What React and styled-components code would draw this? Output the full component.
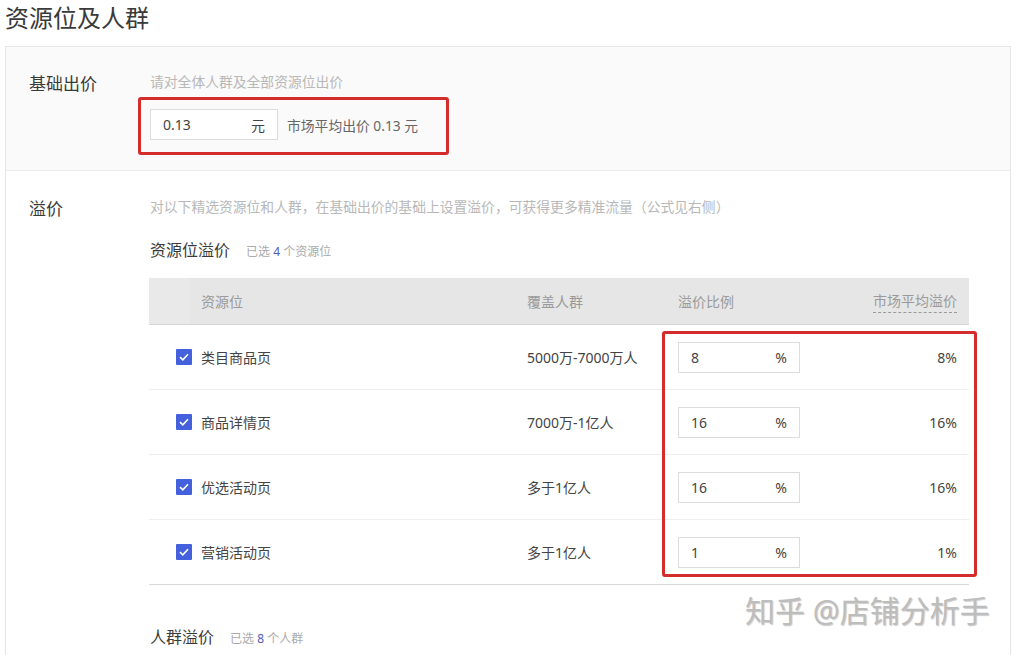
import React from "react";
import styled, { createGlobalStyle } from "styled-components";

const GlobalStyle = createGlobalStyle`
  html, body {
    margin: 0;
    padding: 0;
    background: #fff;
    overflow: hidden;
  }
  body {
    font-family: "Noto Sans", "Noto Sans CJK SC", sans-serif;
    color: #333;
  }
`;

const rows = [
  { name: "类目商品页", cover: "5000万-7000万人", ratio: "8", market: "8%" },
  { name: "商品详情页", cover: "7000万-1亿人", ratio: "16", market: "16%" },
  { name: "优选活动页", cover: "多于1亿人", ratio: "16", market: "16%" },
  { name: "营销活动页", cover: "多于1亿人", ratio: "1", market: "1%" },
];

const App = () => {
  return (
    <Page>
      <GlobalStyle />
      <Title>资源位及人群</Title>
      <Card>
        <Section $muted>
          <Label>基础出价</Label>
          <Content>
            <Hint>请对全体人群及全部资源位出价</Hint>
            <BidRow>
              <Input $width={128}>
                <span>0.13</span>
                <span>元</span>
              </Input>
              <Note>市场平均出价 0.13 元</Note>
              <Highlight style={{ top: -12, left: -12, width: 311, height: 58 }} />
            </BidRow>
          </Content>
        </Section>
        <Section>
          <Label>溢价</Label>
          <Content>
            <Hint>
              对以下精选资源位和人群，在基础出价的基础上设置溢价，可获得更多精准流量（公式见右侧）
            </Hint>
            <SubHead>
              <h3>资源位溢价</h3>
              <small>
                已选 <b>4</b> 个资源位
              </small>
            </SubHead>
            <Table>
              <HeadRow>
                <HeadCell $shade />
                <HeadCell $pad={11}>资源位</HeadCell>
                <HeadCell>覆盖人群</HeadCell>
                <HeadCell>溢价比例</HeadCell>
                <HeadCell $right>
                  <Dotted>市场平均溢价</Dotted>
                </HeadCell>
              </HeadRow>
              {rows.map((r, i) => (
                <Row key={r.name} $last={i === rows.length - 1}>
                  <NameCell>
                    <Check>
                      <svg width="10" height="8" viewBox="0 0 10 8">
                        <path
                          d="M1 4.2 L3.8 6.8 L9 1.2"
                          fill="none"
                          stroke="#fff"
                          strokeWidth="1.6"
                        />
                      </svg>
                    </Check>
                    {r.name}
                  </NameCell>
                  <Cell>{r.cover}</Cell>
                  <Cell>
                    <Input $width={122}>
                      <span>{r.ratio}</span>
                      <span>%</span>
                    </Input>
                  </Cell>
                  <Cell $right>{r.market}</Cell>
                </Row>
              ))}
              <Highlight style={{ top: 53, left: 513, width: 315, height: 246 }} />
            </Table>
            <SubHead $gap={41}>
              <h3>人群溢价</h3>
              <small>
                已选 <b>8</b> 个人群
              </small>
            </SubHead>
          </Content>
        </Section>
      </Card>
      <Watermark>知乎 @店铺分析手</Watermark>
    </Page>
  );
};

const Page = styled.div`
  position: relative;
  width: 1016px;
  height: 655px;
  overflow: hidden;
`;

const Title = styled.h1`
  margin: 0 0 13px;
  padding: 3px 0 0 5px;
  font-size: 24px;
  font-weight: 400;
  line-height: 30px;
  color: #3a3a3a;
`;

const Card = styled.div`
  margin: 0 5px;
  border: 1px solid #e6e6e6;
  min-height: 700px;
`;

const Section = styled.div`
  display: grid;
  grid-template-columns: 121px 1fr;
  padding: ${(p) => (p.$muted ? "25px 0 30px 23px" : "26px 0 40px 23px")};
  background: ${(p) => (p.$muted ? "#fafafa" : "#fff")};
  border-bottom: ${(p) => (p.$muted ? "1px solid #ebebeb" : "none")};
`;

const Label = styled.div`
  padding-top: 1px;
  font-size: 17px;
  line-height: 22px;
  color: #3a3a3a;
`;

const Content = styled.div`
  display: flex;
  flex-direction: column;
  align-items: flex-start;
`;

const Hint = styled.div`
  font-size: 13.8px;
  line-height: 20px;
  color: #b8b8b8;
`;

const BidRow = styled.div`
  position: relative;
  display: flex;
  align-items: center;
  gap: 9px;
  margin-top: 17px;
`;

const Input = styled.div`
  box-sizing: border-box;
  width: ${(p) => p.$width}px;
  height: 31px;
  padding: 0 12px;
  display: flex;
  align-items: center;
  justify-content: space-between;
  background: #fff;
  border: 1px solid #dcdcdc;
  font-size: 14px;
  color: #444;
`;

const Note = styled.span`
  font-size: 13.8px;
  color: #666;
`;

const Highlight = styled.div`
  position: absolute;
  box-sizing: border-box;
  border: 3px solid #d42b2b;
  border-radius: 3px;
  pointer-events: none;
`;

const SubHead = styled.div`
  display: flex;
  align-items: baseline;
  gap: 16px;
  margin-top: ${(p) => p.$gap ?? 22}px;
  h3 {
    margin: 0;
    font-size: 16px;
    font-weight: 400;
    line-height: 22px;
    color: #3a3a3a;
  }
  small {
    font-size: 12px;
    color: #aaa;
  }
  b {
    font-weight: 400;
    color: #4b5bb8;
  }
`;

const Table = styled.div`
  position: relative;
  width: 820px;
  margin-top: 17px;
  margin-left: -1px;
`;

const HeadRow = styled.div`
  display: grid;
  grid-template-columns: 41px 337px 151px 1fr 150px;
  height: 46px;
  background: #e6e6e6;
  border-bottom: 1px solid #d6d6d6;
`;

const HeadCell = styled.div`
  display: flex;
  align-items: center;
  justify-content: ${(p) => (p.$right ? "flex-end" : "flex-start")};
  padding-left: ${(p) => p.$pad ?? 0}px;
  padding-right: ${(p) => (p.$right ? 12 : 0)}px;
  background: ${(p) => (p.$shade ? "#e9e9e9" : "transparent")};
  font-size: 14px;
  color: #9a9a9a;
`;

const Dotted = styled.span`
  border-bottom: 1px dashed #999;
  line-height: 22px;
`;

const Row = styled.div`
  display: grid;
  grid-template-columns: 378px 151px 1fr 150px;
  height: 64px;
  border-bottom: 1px solid ${(p) => (p.$last ? "#d8d8d8" : "#eeeeee")};
  font-size: 14px;
  color: #444;
`;

const Cell = styled.div`
  display: flex;
  align-items: center;
  justify-content: ${(p) => (p.$right ? "flex-end" : "flex-start")};
  padding-right: ${(p) => (p.$right ? "12px" : "0")};
`;

const NameCell = styled.div`
  display: flex;
  align-items: center;
  gap: 9px;
  padding-left: 27px;
`;

const Check = styled.span`
  width: 16px;
  height: 16px;
  display: inline-flex;
  align-items: center;
  justify-content: center;
  background: #4460dc;
  border-radius: 1px;
`;

const Watermark = styled.div`
  position: absolute;
  left: 745px;
  top: 591px;
  font-size: 30px;
  line-height: 40px;
  color: #bdbdbd;
  text-shadow: 1px 1px 1px rgba(0, 0, 0, 0.2);
  white-space: nowrap;
`;

export default App;
